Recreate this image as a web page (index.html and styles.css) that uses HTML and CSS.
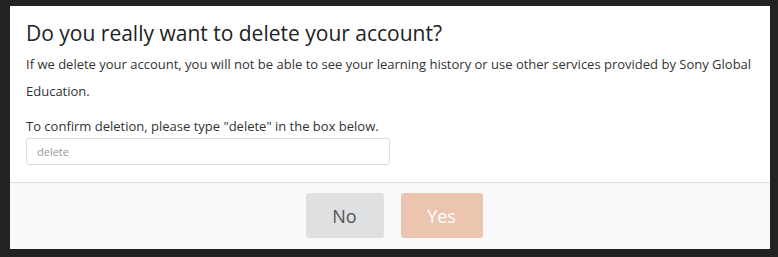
FILE: index.html
```html
<!DOCTYPE html>
<html>
<head>
    <title>Delete account</title>
    <link rel="stylesheet" href="styles.css">
</head>
<body>
    <div class="dialog">
        <div class="dialog-body">
            <div class="title">Do you really want to delete your account?</div>
            <p class="text">If we delete your account, you will not be able to see your learning history or use other services provided by Sony Global Education.</p>
            <label for="confirm" class="label">To confirm deletion, please type "delete" in the box below.</label>
            <input type="text" id="confirm" class="input" placeholder="delete">
        </div>
        <div class="dialog-footer">
            <button type="button" class="btn btn-no">No</button>
            <button type="button" class="btn btn-yes" disabled>Yes</button>
        </div>
    </div>
</body>
</html>
```

FILE: styles.css
```css
body {
    background: #222;
    margin: 0;
    padding: 6px 8px 8px 10px;
    font-family: "Open Sans", sans-serif;
}
.dialog {
    background-color: #fff;
    width: 760px;
    height: 243px;
    display: flex;
    flex-direction: column;
}
.dialog-body {
    padding: 13px 16px 0;
    height: 177px;
    box-sizing: border-box;
    border-bottom: 1px solid #ddd;
}
.title {
    color: #222;
    font-size: 21px;
    line-height: 28px;
}
.text {
    color: #333;
    font-size: 13px;
    line-height: 27px;
    margin: 4px 0 11px;
}
.label {
    display: block;
    color: #333;
    font-size: 13px;
    line-height: 20px;
}
.input {
    display: block;
    margin-top: 2px;
    width: 364px;
    height: 27px;
    box-sizing: border-box;
    border: 1px solid #ddd;
    border-radius: 3px;
    padding: 0 10px;
    font-family: "Open Sans", sans-serif;
    font-size: 11px;
    color: #333;
    outline: 0;
}
.input::placeholder {
    color: #999;
}
.dialog-footer {
    flex: 1;
    background-color: #f9f9f9;
    display: flex;
    justify-content: center;
    align-items: flex-start;
    gap: 17px;
    padding: 10px 0 0 8px;
}
.btn {
    height: 45px;
    border: 0;
    border-radius: 3px;
    font-family: "Open Sans", sans-serif;
    font-size: 18px;
    cursor: pointer;
}
.btn-no {
    width: 78px;
    background-color: #dfe0e2;
    color: #555;
}
.btn-yes {
    width: 82px;
    background-color: #ecc5b0;
    color: #fff;
}
```
